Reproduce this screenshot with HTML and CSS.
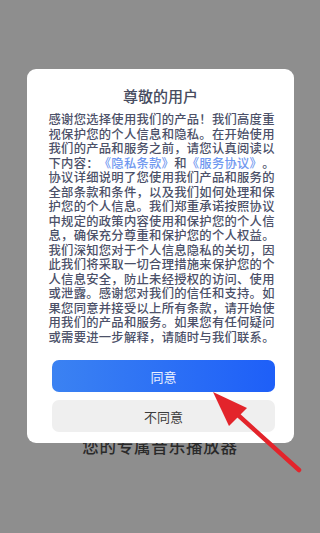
FILE: index.html
```html
<!DOCTYPE html>
<html lang="zh-CN">
<head>
<meta charset="utf-8">
<title>尊敬的用户</title>
<link rel="stylesheet" href="styles.css">
</head>
<body>
<main class="page">
  <p class="slogan">您的专属音乐播放器</p>
</main>
<div class="overlay">
  <section class="dialog">
    <h1 class="dialog-title">尊敬的用户</h1>
    <p class="dialog-text">
      <span class="line">感谢您选择使用我们的产品！我们高度重</span>
      <span class="line">视保护您的个人信息和隐私。在开始使用</span>
      <span class="line">我们的产品和服务之前，请您认真阅读以</span>
      <span class="line">下内容：<a class="link">《隐私条款》</a>和<a class="link">《服务协议》</a>。</span>
      <span class="line">协议详细说明了您使用我们产品和服务的</span>
      <span class="line">全部条款和条件，以及我们如何处理和保</span>
      <span class="line">护您的个人信息。我们郑重承诺按照协议</span>
      <span class="line">中规定的政策内容使用和保护您的个人信</span>
      <span class="line">息，确保充分尊重和保护您的个人权益。</span>
      <span class="line">我们深知您对于个人信息隐私的关切，因</span>
      <span class="line">此我们将采取一切合理措施来保护您的个</span>
      <span class="line">人信息安全，防止未经授权的访问、使用</span>
      <span class="line">或泄露。感谢您对我们的信任和支持。如</span>
      <span class="line">果您同意并接受以上所有条款，请开始使</span>
      <span class="line">用我们的产品和服务。如果您有任何疑问</span>
      <span class="line">或需要进一步解释，请随时与我们联系。</span>
    </p>
    <div class="actions">
      <button class="btn btn-agree">同意</button>
      <button class="btn btn-decline">不同意</button>
    </div>
  </section>
</div>
<svg class="arrow" width="320" height="533" viewBox="0 0 320 533">
  <line x1="299" y1="470" x2="228" y2="406" stroke="#e3242b" stroke-width="4.5" stroke-linecap="round"/>
  <polygon points="213,392 247,408 229,426" fill="#e3242b"/>
</svg>
</body>
</html>
```
FILE: styles.css
```css
html, body {
  margin: 0;
  padding: 0;
}
body {
  width: 320px;
  height: 533px;
  overflow: hidden;
  background: #8e8e8e;
  font-family: "Noto Sans CJK SC", "Noto Sans", sans-serif;
  position: relative;
}
.page {
  padding-top: 436px;
  display: flex;
  justify-content: center;
}
.slogan {
  margin: 0;
  font-size: 16.5px;
  line-height: 20px;
  font-weight: 500;
  color: #2a2a2a;
  letter-spacing: 0.8px;
}
.overlay {
  position: absolute;
  inset: 0;
}
.dialog {
  position: absolute;
  top: 69px;
  left: 27px;
  width: 267px;
  height: 374px;
  box-sizing: border-box;
  background: #ffffff;
  border-radius: 9px;
  padding: 16px 0 11px;
  display: flex;
  flex-direction: column;
  align-items: center;
}
.dialog-title {
  margin: 0;
  font-size: 15px;
  font-weight: 500;
  line-height: 22px;
  color: #474c60;
}
.dialog-text {
  margin: 5px 0 0 2px;
  width: 226px;
  font-size: 12.3px;
  line-height: 14.5px;
  font-weight: 500;
  color: #4c5169;
  text-spacing-trim: space-all;
}
.line {
  display: block;
  white-space: nowrap;
  text-align: justify;
  text-align-last: justify;
}
.link {
  color: #6f98f0;
}
.actions {
  margin-top: auto;
  width: 223px;
  margin-left: 6px;
  display: flex;
  flex-direction: column;
  gap: 8px;
}
.btn {
  height: 32px;
  border: none;
  border-radius: 7px;
  font-family: inherit;
  font-size: 13px;
  padding: 0;
}
.btn-agree {
  background: linear-gradient(90deg, #3b82f2, #1e5ff8);
  color: #e9f0ff;
}
.btn-decline {
  background: #efefef;
  color: #3c3c3c;
}
.arrow {
  position: absolute;
  top: 0;
  left: 0;
  pointer-events: none;
}
```
